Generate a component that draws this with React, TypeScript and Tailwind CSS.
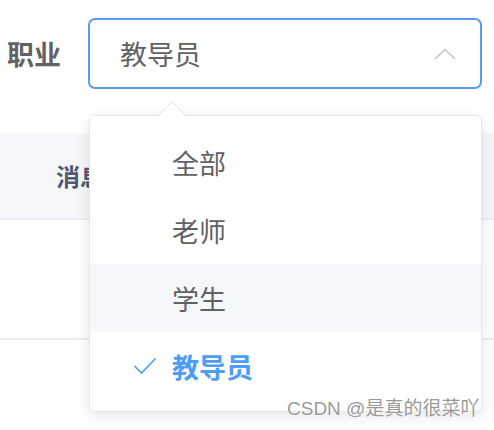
import React from "react";

const items = ["全部", "老师", "学生", "教导员"];

export default function App() {
  return (
    <div
      className="relative w-[494px] h-[430px] overflow-hidden bg-white"
      style={{ fontFamily: '"Noto Sans CJK SC", "Noto Sans", sans-serif' }}
    >
      {/* form row */}
      <div className="flex items-center pt-[18px]">
        <div className="w-[88px] pl-[7px] text-[27px] font-bold text-[#606266] leading-none">职业</div>
        <div className="w-[394px] h-[71px] rounded-[7px] border-2 border-[#5a9cf5] flex items-center pl-[30px] pr-[24px]">
          <span className="flex-1 text-[27px] text-[#606266] leading-none">教导员</span>
          <svg width="22" height="12" viewBox="0 0 22 12" fill="none">
            <path d="M1 11 L11 1.5 L21 11" stroke="#c0c4cc" strokeWidth="1.6" />
          </svg>
        </div>
      </div>

      {/* table */}
      <div className="mt-[44px]">
        <div className="h-[87px] bg-[#f5f7fa] border-b-2 border-[#ebeef5] flex items-center pl-[56px]">
          <span className="text-[24px] font-bold text-[#515a6e] leading-none">消息内容</span>
        </div>
        <div className="h-[120px] border-b-2 border-[#ebeef5]" />
      </div>

      {/* dropdown */}
      <div className="absolute left-[89px] top-[115px] w-[393px] h-[297px] rounded-[6px] border border-[#e4e7ed] bg-white shadow-[0_4px_16px_rgba(0,0,0,0.1)] py-[12px]">
        <div className="absolute -top-[11px] left-[72px] w-[20px] h-[20px] rotate-45 bg-white border-l border-t border-[#e4e7ed]" />
        {items.map((it, i) => {
          const sel = i === 3;
          const hover = i === 2;
          return (
            <div
              key={it}
              className={`relative h-[68px] flex items-center pl-[82px] text-[27px] leading-none ${
                hover ? "bg-[#f5f7fa]" : ""
              } ${sel ? "text-[#4d9cf8] font-bold" : "text-[#606266]"}`}
            >
              {sel && (
                <svg className="absolute left-[43px] top-[25px]" width="24" height="18" viewBox="0 0 24 18" fill="none">
                  <path d="M1.5 9 L8.5 16 L22.5 1.5" stroke="#4d9cf8" strokeWidth="1.6" />
                </svg>
              )}
              {it}
            </div>
          );
        })}
      </div>

      {/* watermark */}
      <div
        className="absolute left-[287px] top-[399px] text-[19px] text-[#9a9a9a] leading-none whitespace-nowrap"
        style={{
          fontFamily: '"Liberation Sans", "Noto Sans CJK SC", sans-serif',
          textShadow: "0 0 2px #fff, 0 0 2px #fff",
        }}
      >
        CSDN @是真的很菜吖
      </div>
    </div>
  );
}
